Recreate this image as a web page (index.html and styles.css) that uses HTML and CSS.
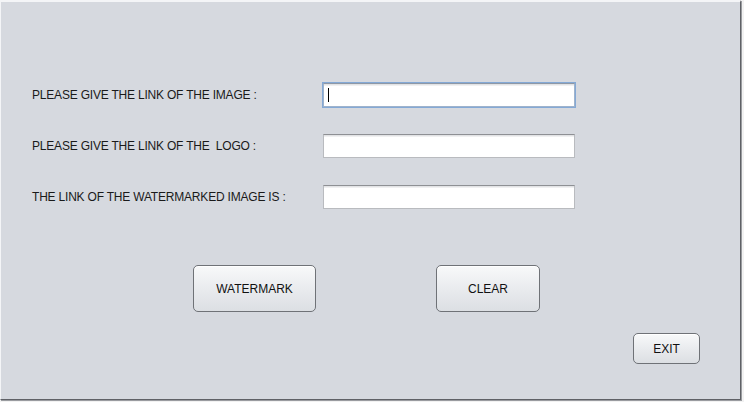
FILE: index.html
```html
<!DOCTYPE html>
<html>
<head>
<meta charset="utf-8">
<link rel="stylesheet" href="styles.css">
</head>
<body>
<div class="frame">
  <div class="form">
    <div class="row">
      <div class="label">PLEASE GIVE THE LINK OF THE IMAGE :</div>
      <div class="field focused"><span class="caret"></span></div>
    </div>
    <div class="row">
      <div class="label">PLEASE GIVE THE LINK OF THE&nbsp; LOGO :</div>
      <div class="field"></div>
    </div>
    <div class="row">
      <div class="label">THE LINK OF THE WATERMARKED IMAGE IS :</div>
      <div class="field"></div>
    </div>
  </div>
  <div class="actions">
    <button class="btn btn-wm">WATERMARK</button>
    <button class="btn btn-clear">CLEAR</button>
  </div>
  <div class="exit-row">
    <button class="btn btn-exit">EXIT</button>
  </div>
</div>
</body>
</html>
```
FILE: styles.css
```css
html, body {
  margin: 0;
  padding: 0;
  background: #f2f2f2;
}
body {
  width: 744px;
  height: 402px;
  overflow: hidden;
  font-family: "Liberation Sans", Arial, sans-serif;
}
.frame {
  box-sizing: border-box;
  width: 741px;
  height: 400px;
  background: #d6d9df;
  border-top: 2px solid #f4f5f7;
  border-left: 1px solid #f4f5f7;
  border-right: 1px solid #5f6166;
  border-bottom: 1px solid #5f6166;
  box-shadow: 1px 1px 0 #9a9ca0;
  display: flex;
  flex-direction: column;
}
.form {
  display: flex;
  flex-direction: column;
  gap: 27px;
  padding: 81px 0 0 31px;
}
.row {
  display: flex;
  align-items: center;
  height: 24px;
}
.label {
  width: 291px;
  font-size: 12px;
  color: #1a1a1a;
  letter-spacing: -0.2px;
}
.field {
  box-sizing: border-box;
  width: 252px;
  height: 24px;
  background: #fff;
  border: 1px solid #b9bbbf;
  border-top-color: #8e9094;
  box-shadow: inset 0 1px 0 #e2e3e5, inset 0 2px 0 #f0f0f1;
  position: relative;
}
.field.focused {
  outline: 1px solid #84a9d6;
  border-color: #9fb3cc;
  border-top-color: #8e98a6;
}
.caret {
  position: absolute;
  left: 4px;
  top: 4px;
  width: 1px;
  height: 14px;
  background: #000;
}
.actions {
  display: flex;
  padding: 56px 0 0 192px;
  gap: 120px;
}
.btn {
  box-sizing: border-box;
  font-family: "Liberation Sans", Arial, sans-serif;
  font-size: 12px;
  color: #111;
  border: 1px solid #6f7277;
  border-radius: 5px;
  background: linear-gradient(#f8f9fa, #e8eaed 55%, #dcdfe3);
  box-shadow: inset 0 1px 0 #ffffff;
  padding: 0;
  margin: 0;
}
.btn-wm {
  width: 123px;
  height: 47px;
}
.btn-clear {
  width: 104px;
  height: 47px;
}
.exit-row {
  display: flex;
  justify-content: flex-end;
  padding: 21px 40px 0 0;
}
.btn-exit {
  width: 67px;
  height: 31px;
}
```
